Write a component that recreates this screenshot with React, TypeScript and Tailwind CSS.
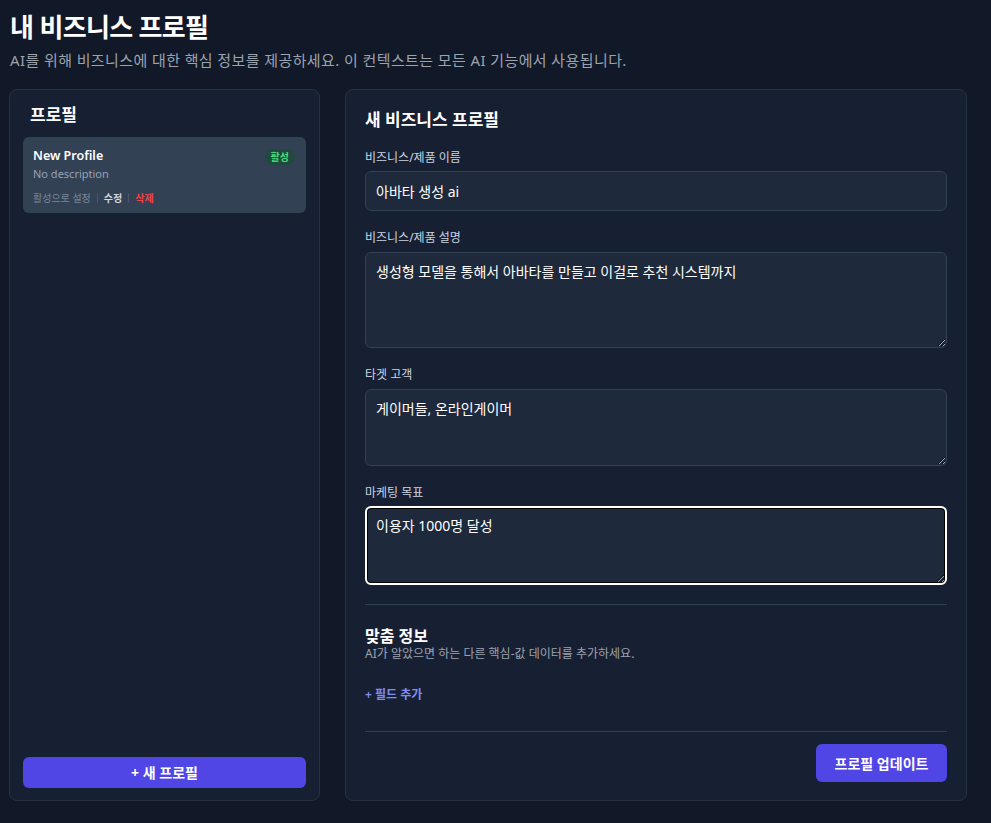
import React from "react";

const font = { fontFamily: "'Noto Sans', 'Noto Sans CJK KR', sans-serif" };

export default function App() {
  return (
    <div className="min-h-[823px] w-[991px] bg-[#111827] text-white" style={font}>
      <div className="pl-[10px] pt-[10px]">
        <h1 className="text-[26px] font-bold leading-[34px] tracking-tight">내 비즈니스 프로필</h1>
        <p className="mt-[6px] text-[15px] leading-[20px] tracking-[0.4px] text-[#9ca3af]">
          AI를 위해 비즈니스에 대한 핵심 정보를 제공하세요. 이 컨텍스트는 모든 AI 기능에서 사용됩니다.
        </p>
      </div>
      <div className="mt-[19px] flex gap-[25px] pl-[9px]">
        <aside className="flex h-[712px] w-[311px] flex-col rounded-lg border border-[#263144] bg-[#172033] px-[13px] pb-[12px] pt-[14px]">
          <h2 className="px-[7px] text-[17px] font-bold leading-[22px]">프로필</h2>
          <div className="mt-[11px] rounded-md bg-[#334155] px-[10px] pb-[8px] pt-[10px]">
            <div className="flex items-start justify-between">
              <div>
                <div className="text-[12.5px] font-semibold leading-[18px]">New Profile</div>
                <div className="text-[11px] leading-[17px] text-[#94a3b8]">No description</div>
              </div>
              <span className="mr-[1px] mt-[2px] rounded-full bg-[#1f4a3d] px-[6px] py-[1px] text-[10px] font-semibold leading-[14px] text-[#4ade80]">활성</span>
            </div>
            <div className="mt-[9px] flex items-center text-[10px] leading-[14px]">
              <span className="text-[#7b8799]">활성으로 설정</span>
              <span className="mx-[6px] h-[10px] w-px bg-[#4b5563]" />
              <span className="font-semibold text-[#d1d5db]">수정</span>
              <span className="mx-[6px] h-[10px] w-px bg-[#4b5563]" />
              <span className="font-semibold text-[#ef4444]">삭제</span>
            </div>
          </div>
          <div className="flex-1" />
          <button className="h-[31px] w-full rounded-md bg-[#4f46e5] text-[14px] font-bold text-white">+ 새 프로필</button>
        </aside>
        <main className="h-[712px] w-[622px] rounded-lg border border-[#263144] bg-[#172033] px-[19px] pt-[19px]">
          <h2 className="text-[17px] font-bold leading-[22px]">새 비즈니스 프로필</h2>
          <div className="mt-[19px]">
            <label className="block text-[12px] leading-[16px] text-[#cbd5e1]">비즈니스/제품 이름</label>
            <div className="mt-[5px] flex h-[40px] items-center rounded-md border border-[#334155] bg-[#1e293b] px-[10px] text-[14px]">아바타 생성 ai</div>
          </div>
          <div className="mt-[19px]">
            <label className="block text-[12px] leading-[16px] text-[#cbd5e1]">비즈니스/제품 설명</label>
            <textarea
              readOnly
              className="mt-[6px] block h-[96px] w-full resize-y rounded-md border border-[#334155] bg-[#1e293b] px-[10px] py-[9px] text-[14px] leading-[20px] text-white outline-none"
              defaultValue="생성형 모델을 통해서 아바타를 만들고 이걸로 추천 시스템까지"
            />
          </div>
          <div className="mt-[19px]">
            <label className="block text-[12px] leading-[16px] text-[#cbd5e1]">타겟 고객</label>
            <textarea
              readOnly
              className="mt-[6px] block h-[77px] w-full resize-y rounded-md border border-[#334155] bg-[#1e293b] px-[10px] py-[9px] text-[14px] leading-[20px] text-white outline-none"
              defaultValue="게이머들, 온라인게이머"
            />
          </div>
          <div className="mt-[19px]">
            <label className="block text-[12px] leading-[16px] text-[#cbd5e1]">마케팅 목표</label>
            <textarea
              readOnly
              className="mt-[5px] block h-[79px] w-full resize-y rounded-md border-2 border-white bg-[#1e293b] px-[9px] py-[8px] text-[14px] leading-[20px] text-white shadow-[inset_0_0_0_1px_#000] outline-none"
              defaultValue="이용자 1000명 달성"
            />
          </div>
          <div className="mt-[19px] border-t border-[#334155] pt-[21px]">
            <h3 className="text-[16px] font-bold leading-[20px]">맞춤 정보</h3>
            <p className="text-[12px] leading-[16px] text-[#9ca3af]">AI가 알았으면 하는 다른 핵심-값 데이터를 추가하세요.</p>
            <button className="mt-[25px] text-[12px] font-semibold leading-[16px] text-[#818cf8]">+ 필드 추가</button>
          </div>
          <div className="mt-[26px] flex justify-end border-t border-[#334155] pt-[12px]">
            <button className="h-[38px] w-[131px] rounded-md bg-[#4f46e5] text-[14px] font-bold text-white">프로필 업데이트</button>
          </div>
        </main>
      </div>
    </div>
  );
}
